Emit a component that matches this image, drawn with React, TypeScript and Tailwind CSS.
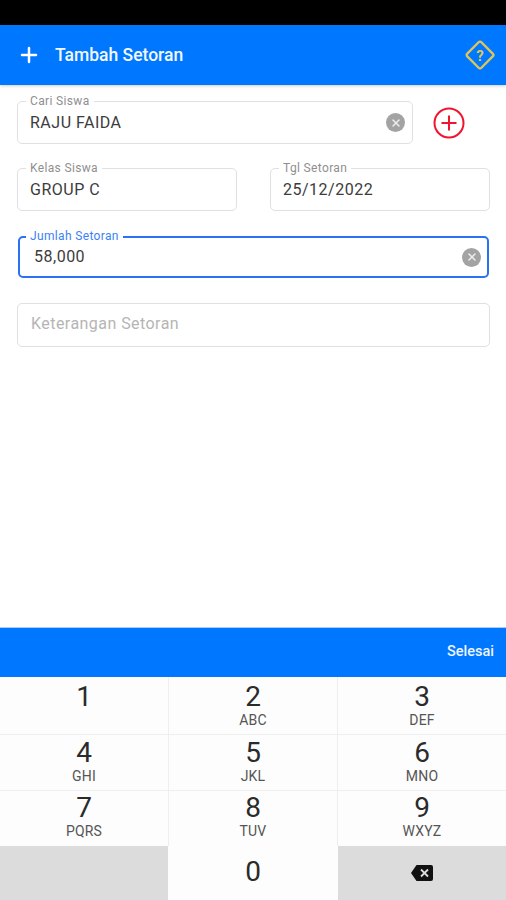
import { Plus, X } from 'lucide-react';

const font = { fontFamily: 'Roboto, sans-serif' };

function Field({ label, value, focused, clear, className }: { label: string; value: string; focused?: boolean; clear?: boolean; className?: string }) {
  return (
    <div className={`relative flex items-center justify-between rounded-[5px] ${focused ? 'h-[42px] border-2 border-[#2a72f0] pl-[14px] pr-[6px]' : 'h-[43px] border border-[#e0e0e0] pl-3 pr-[7px]'} ${className ?? ''}`}>
      <span className={`absolute bg-white px-1 text-[12px] leading-[12px] tracking-[0.35px] ${focused ? 'left-[6px] top-[-8px] text-[#3b82f6]' : 'left-[8px] top-[-7px] text-[#8f8f8f]'}`}>{label}</span>
      <span className="text-[16px] tracking-[0.5px] text-[#3c3c3c]">{value}</span>
      {clear && (
        <span className="flex h-[19px] w-[19px] items-center justify-center rounded-full bg-[#a3a3a3]">
          <X size={12} strokeWidth={3} className="text-[#eeeeee]" />
        </span>
      )}
    </div>
  );
}

function Key({ n, sub, top }: { n: string; sub?: string; top: string }) {
  return (
    <div className={`flex flex-col items-center bg-[#fdfdfd] ${top}`}>
      <span className="text-[28px] leading-[30px] text-[#2b2b2b]">{n}</span>
      <span className="text-[14px] leading-[16px] tracking-[0.2px] text-[#555555]">{sub}</span>
    </div>
  );
}

export default function App() {
  return (
    <div className="flex h-[900px] w-[506px] flex-col overflow-hidden bg-white" style={font}>
      <div className="h-[25px] bg-black" />
      <header className="flex h-[60px] items-center justify-between bg-[#0077ff] pl-[17px] pr-[11px] shadow-[0_1px_3px_rgba(0,0,0,0.2)]">
        <div className="flex items-center gap-[14px]">
          <Plus size={24} strokeWidth={2.5} className="text-white" />
          <span className="pt-[1px] text-[17.5px] font-medium text-[#f2f7ff]">Tambah Setoran</span>
        </div>
        <svg width="30" height="30" viewBox="0 0 30 30" fill="none">
          <rect x="5" y="5" width="20" height="20" rx="2" transform="rotate(45 15 15)" stroke="#d9c65c" strokeWidth="2.4" />
          <text x="15" y="20.5" textAnchor="middle" fontSize="15" fontWeight="700" fill="#d9c65c" fontFamily="Roboto, sans-serif">?</text>
        </svg>
      </header>

      <main className="flex flex-1 flex-col pl-[17px] pr-[16px] pt-[16px]">
        <div className="flex items-center">
          <Field label="Cari Siswa" value="RAJU FAIDA" clear className="w-[396px]" />
          <svg width="32" height="32" viewBox="0 0 32 32" fill="none" className="ml-[20px]">
            <circle cx="16" cy="16" r="14.5" stroke="#f0142f" strokeWidth="2" />
            <path d="M16 8.5v15M8.5 16h15" stroke="#f0142f" strokeWidth="2" />
          </svg>
        </div>
        <div className="mt-[24px] flex justify-between">
          <Field label="Kelas Siswa" value="GROUP C" className="w-[220px]" />
          <Field label="Tgl Setoran" value="25/12/2022" className="w-[220px]" />
        </div>
        <Field label="Jumlah Setoran" value="58,000" focused clear className="ml-[1px] mt-[25px] w-[471px]" />
        <div className="mt-[25px] flex h-[44px] w-[473px] items-center rounded-[5px] border border-[#e0e0e0] pb-[2px] pl-[13px]">
          <span className="text-[16px] tracking-[0.45px] text-[#b5b5b5]">Keterangan Setoran</span>
        </div>
      </main>

      <div className="flex h-[50px] items-center justify-end border-t border-[#a9cdfa] bg-[#0077ff] pb-[2px] pr-[12px]">
        <span className="text-[14.5px] font-medium text-[#eef5ff]">Selesai</span>
      </div>

      <div className="grid h-[223px] grid-cols-[168px_1px_168px_1px_168px] grid-rows-[57px_1px_55px_1px_55px_54px] bg-[#efefef]">
        <Key n="1" top="pt-[5px]" /><div /><Key n="2" sub="ABC" top="pt-[5px]" /><div /><Key n="3" sub="DEF" top="pt-[5px]" />
        <div className="col-span-5" />
        <Key n="4" sub="GHI" top="pt-[3px]" /><div /><Key n="5" sub="JKL" top="pt-[3px]" /><div /><Key n="6" sub="MNO" top="pt-[3px]" />
        <div className="col-span-5" />
        <Key n="7" sub="PQRS" top="pt-[2px]" /><div /><Key n="8" sub="TUV" top="pt-[2px]" /><div /><Key n="9" sub="WXYZ" top="pt-[2px]" />
        <div className="bg-[#dcdcdc]" />
        <div className="bg-[#fdfdfd]" />
        <div className="flex justify-center bg-[#fdfdfd] pt-[11px]">
          <span className="text-[28px] leading-[30px] text-[#2b2b2b]">0</span>
        </div>
        <div className="bg-[#fdfdfd]" />
        <div className="flex items-center justify-center bg-[#dcdcdc] pb-[1px]">
          <svg width="24" height="18" viewBox="0 0 24 18">
            <path d="M6.5 1H21a2 2 0 0 1 2 2v12a2 2 0 0 1-2 2H6.5L1 9z" fill="#111111" />
            <path d="M11 5.5l7 7M18 5.5l-7 7" stroke="#dcdcdc" strokeWidth="1.8" />
          </svg>
        </div>
      </div>
    </div>
  );
}
